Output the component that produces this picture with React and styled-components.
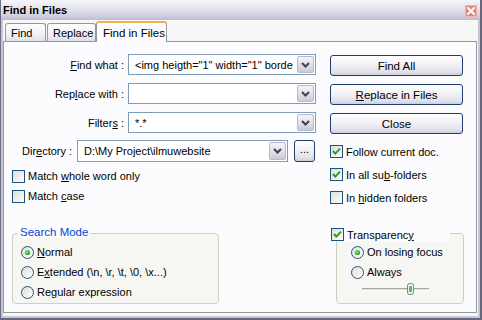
import styled, { createGlobalStyle } from "styled-components";

const GlobalStyle = createGlobalStyle`
  html, body { margin: 0; padding: 0; background: #fff; }
  body {
    font-family: "Liberation Sans", Arial, sans-serif;
    font-size: 11px;
    color: #000;
  }
  * { box-sizing: border-box; }
`;

// ---------- little drawings ----------

const Chevron = () => (
  <svg width="9" height="6" viewBox="0 0 9 6">
    <path d="M1 1 L4.5 4.5 L8 1" fill="none" stroke="#3f3f55" strokeWidth="2" />
  </svg>
);

const CloseGlyph = () => (
  <svg width="8" height="8" viewBox="0 0 8 8">
    <path d="M1 1 L7 7 M7 1 L1 7" stroke="#fff" strokeWidth="2" strokeLinecap="square" />
  </svg>
);

const CheckBox = ({ checked }) => (
  <svg width="13" height="13" viewBox="0 0 13 13">
    <defs>
      <linearGradient id="cbfill" x1="0" y1="0" x2="1" y2="1">
        <stop offset="0" stopColor="#dcdcd7" />
        <stop offset="1" stopColor="#ffffff" />
      </linearGradient>
    </defs>
    <rect x="0.5" y="0.5" width="12" height="12" fill="url(#cbfill)" stroke="#1c5180" />
    {checked && (
      <path d="M3 6 L5.3 8.6 L10 3.6" fill="none" stroke="#21a121" strokeWidth="2" />
    )}
  </svg>
);

const RadioDot = ({ checked }) => (
  <svg width="13" height="13" viewBox="0 0 13 13">
    <defs>
      <linearGradient id="rbfill" x1="0" y1="0" x2="1" y2="1">
        <stop offset="0" stopColor="#dcdcd7" />
        <stop offset="1" stopColor="#ffffff" />
      </linearGradient>
      <radialGradient id="rbdot" cx="0.4" cy="0.35" r="0.7">
        <stop offset="0" stopColor="#7ae07a" />
        <stop offset="1" stopColor="#21a121" />
      </radialGradient>
    </defs>
    <circle cx="6.5" cy="6.5" r="6" fill="url(#rbfill)" stroke="#2a5183" />
    {checked && <circle cx="6.5" cy="6.5" r="2.6" fill="url(#rbdot)" />}
  </svg>
);

const SliderThumb = () => (
  <svg width="7" height="12" viewBox="0 0 7 12">
    <rect x="0.5" y="0.5" width="6" height="11" rx="2" fill="#eef0ea" stroke="#7c8a7c" />
    <rect x="2" y="3" width="3" height="6" rx="1" fill="#5cc05c" />
  </svg>
);

// ---------- window chrome ----------

const Window = styled.div`
  width: 482px;
  height: 320px;
  display: flex;
  flex-direction: column;
  border-left: 1px solid #6c6c84;
  border-right: 2px solid #66667c;
  border-bottom: 2px solid #66667c;
  background: #c6c6d6;
`;

const TitleBar = styled.div`
  height: 20px;
  flex-shrink: 0;
  display: flex;
  align-items: center;
  justify-content: space-between;
  padding: 0 3px 0 2px;
  background: linear-gradient(180deg, #f6f6fb 0%, #e2e2ec 45%, #cfcfde 80%, #bdbdd0 100%);
  font-weight: bold;
  font-size: 11px;
`;

const CloseButton = styled.div`
  width: 12px;
  height: 12px;
  margin-top: 2px;
  display: flex;
  align-items: center;
  justify-content: center;
  background: #e6837a;
  border: 1px solid #f3b3ab;
`;

const Client = styled.div`
  flex: 1;
  display: flex;
  flex-direction: column;
  margin: 0 2px 2px 2px;
  padding: 0 1px 3px 0;
  background: #f7f7f6;
`;

// ---------- tabs ----------

const TabStrip = styled.div`
  height: 21px;
  flex-shrink: 0;
  display: flex;
  align-items: flex-end;
  padding-left: 2px;
  position: relative;
  z-index: 1;
`;

const Tab = styled.div`
  width: ${(p) => p.$w}px;
  margin-left: ${(p) => p.$gap || 0}px;
  height: ${(p) => (p.$active ? 21 : 18)}px;
  margin-bottom: ${(p) => (p.$active ? -1 : 0)}px;
  padding-left: ${(p) => (p.$active ? 6 : 5)}px;
  padding-top: ${(p) => (p.$active ? 0 : 1)}px;
  display: flex;
  align-items: center;
  white-space: nowrap;
  overflow: hidden;
  border: 1px solid #919b9c;
  border-bottom: none;
  border-top: ${(p) => (p.$active ? "2px solid #f2b04a" : "1px solid #919b9c")};
  border-radius: 3px 3px 0 0;
  background: ${(p) =>
    p.$active
      ? "#fcfcfe"
      : "linear-gradient(180deg, #ffffff 0%, #f3f3f6 55%, #dedee6 100%)"};
  font-size: ${(p) => (p.$active ? 11.5 : 11)}px;
`;

const Panel = styled.div`
  flex: 1;
  display: flex;
  padding: 12px 0 0 8px;
  border: 1px solid #919b9c;
  background: #fcfcfe;
`;

// ---------- columns ----------

const LeftCol = styled.div`
  width: 304px;
  display: flex;
  flex-direction: column;
`;

const RightCol = styled.div`
  width: 133px;
  margin-left: 14px;
  display: flex;
  flex-direction: column;
`;

const FieldStack = styled.div`
  display: flex;
  flex-direction: column;
  gap: 8px;
`;

const FieldRow = styled.div`
  height: ${(p) => p.$h || 21}px;
  display: flex;
  align-items: center;
  gap: 4px;
  margin-top: ${(p) => p.$mt || 0}px;
  padding-left: ${(p) => p.$pl || 0}px;
`;

const Label = styled.div`
  width: ${(p) => p.$w}px;
  text-align: ${(p) => p.$align || "right"};
  white-space: nowrap;
`;

const Combo = styled.div`
  width: ${(p) => p.$w}px;
  height: 100%;
  display: flex;
  align-items: stretch;
  border: 1px solid #7f9db9;
  background: #fff;
`;

const ComboText = styled.div`
  flex: 1;
  padding-left: 6px;
  overflow: hidden;
  white-space: nowrap;
  display: flex;
  align-items: center;
`;

const DropButton = styled.div`
  width: 17px;
  margin: 1px;
  display: flex;
  align-items: center;
  justify-content: center;
  border: 1px solid #b9b9cc;
  border-radius: 2px;
  background: linear-gradient(180deg, #f4f4f8 0%, #dedee8 60%, #cacad8 100%);
`;

const PushButton = styled.div`
  height: ${(p) => p.$h || 21}px;
  width: ${(p) => (p.$w ? `${p.$w}px` : "100%")};
  margin-left: ${(p) => p.$ml || 0}px;
  display: flex;
  align-items: center;
  justify-content: center;
  border: 1px solid #1f3d6e;
  border-radius: 3px;
  background: linear-gradient(180deg, #ffffff 0%, #f2f2f6 45%, #e0e0ea 85%, #cdcddb 100%);
  font-size: 11.5px;
  padding-bottom: ${(p) => p.$pb || 0}px;
`;

const ButtonStack = styled.div`
  margin-top: 1px;
  display: flex;
  flex-direction: column;
  gap: 8px;
`;

const CheckRow = styled.div`
  height: ${(p) => p.$h || 20}px;
  margin-top: ${(p) => p.$mt || 0}px;
  display: flex;
  align-items: center;
  gap: 3px;
  white-space: nowrap;
  svg { flex-shrink: 0; }
`;

// ---------- group boxes ----------

const GroupBox = styled.div`
  position: relative;
  width: ${(p) => p.$w}px;
  height: 71px;
  margin-top: ${(p) => p.$mt}px;
  margin-left: ${(p) => p.$ml || 0}px;
  padding: 8px 0 0 ${(p) => p.$pl}px;
  border: 1px solid #d0d0bf;
  border-radius: 4px;
  background: #f6f6f3;
`;

const Legend = styled.div`
  position: absolute;
  top: -8px;
  left: 5px;
  padding: 0 2px;
  background: #fcfcfe;
  color: #0046d5;
  font-size: 11.5px;
`;

const LegendCheck = styled.div`
  position: absolute;
  top: -6px;
  left: -6px;
  width: 119px;
  height: 13px;
  display: flex;
  align-items: center;
  gap: 3px;
  background: #fcfcfe;
`;

const SliderRow = styled.div`
  height: 14px;
  margin-left: 11px;
  width: 67px;
  position: relative;
  display: flex;
  align-items: center;
`;

const Track = styled.div`
  width: 100%;
  height: 3px;
  border-top: 1px solid #a9a9a4;
  border-bottom: 1px solid #ffffff;
  background: #dcdcd6;
`;

const Thumb = styled.div`
  position: absolute;
  left: 45px;
  top: 1px;
  display: flex;
`;

export default function App() {
  return (
    <>
      <GlobalStyle />
      <Window>
        <TitleBar>
          <span>Find in Files</span>
          <CloseButton>
            <CloseGlyph />
          </CloseButton>
        </TitleBar>
        <Client>
          <TabStrip>
            <Tab $w={41}>Find</Tab>
            <Tab $w={49} $gap={1}>Replace</Tab>
            <Tab $w={71} $active>Find in Files</Tab>
          </TabStrip>
          <Panel>
            <LeftCol>
              <FieldStack>
                <FieldRow>
                  <Label $w={112}><u>F</u>ind what :</Label>
                  <Combo $w={188}>
                    <ComboText>&lt;img heigth="1" width="1" borde</ComboText>
                    <DropButton><Chevron /></DropButton>
                  </Combo>
                </FieldRow>
                <FieldRow>
                  <Label $w={112}>Rep<u>l</u>ace with :</Label>
                  <Combo $w={188}>
                    <ComboText />
                    <DropButton><Chevron /></DropButton>
                  </Combo>
                </FieldRow>
                <FieldRow>
                  <Label $w={112}>Filter<u>s</u> :</Label>
                  <Combo $w={188}>
                    <ComboText>*.*</ComboText>
                    <DropButton><Chevron /></DropButton>
                  </Combo>
                </FieldRow>
              </FieldStack>
              <FieldRow $h={22} $mt={7} $pl={10}>
                <Label $w={51} $align="left">Dir<u>e</u>ctory :</Label>
                <Combo $w={211}>
                  <ComboText>D:\My Project\ilmuwebsite</ComboText>
                  <DropButton><Chevron /></DropButton>
                </Combo>
                <PushButton $w={21} $h={22} $ml={2} $pb={4}>...</PushButton>
              </FieldRow>
              <CheckRow $mt={4}>
                <CheckBox />
                <span>Match <u>w</u>hole word only</span>
              </CheckRow>
              <CheckRow>
                <CheckBox />
                <span>Match <u>c</u>ase</span>
              </CheckRow>
              <GroupBox $w={207} $mt={27} $pl={8}>
                <Legend>Search Mode</Legend>
                <CheckRow>
                  <RadioDot checked />
                  <span><u>N</u>ormal</span>
                </CheckRow>
                <CheckRow>
                  <RadioDot />
                  <span>E<u>x</u>tended (\n, \r, \t, \0, \x...)</span>
                </CheckRow>
                <CheckRow>
                  <RadioDot />
                  <span>Re<u>g</u>ular expression</span>
                </CheckRow>
              </GroupBox>
            </LeftCol>
            <RightCol>
              <ButtonStack>
                <PushButton>Find All</PushButton>
                <PushButton><span><u>R</u>eplace in Files</span></PushButton>
                <PushButton>Close</PushButton>
              </ButtonStack>
              <CheckRow $h={23} $mt={6}>
                <CheckBox checked />
                <span>Follow current doc.</span>
              </CheckRow>
              <CheckRow $h={23}>
                <CheckBox checked />
                <span>In all su<u>b</u>-folders</span>
              </CheckRow>
              <CheckRow $h={23}>
                <CheckBox />
                <span>In <u>h</u>idden folders</span>
              </CheckRow>
              <GroupBox $w={128} $mt={24} $ml={6} $pl={14}>
                <LegendCheck>
                  <CheckBox checked />
                  <span>Transparenc<u>y</u></span>
                </LegendCheck>
                <CheckRow>
                  <RadioDot checked />
                  <span>On losing focus</span>
                </CheckRow>
                <CheckRow>
                  <RadioDot />
                  <span>Always</span>
                </CheckRow>
                <SliderRow>
                  <Track />
                  <Thumb><SliderThumb /></Thumb>
                </SliderRow>
              </GroupBox>
            </RightCol>
          </Panel>
        </Client>
      </Window>
    </>
  );
}
